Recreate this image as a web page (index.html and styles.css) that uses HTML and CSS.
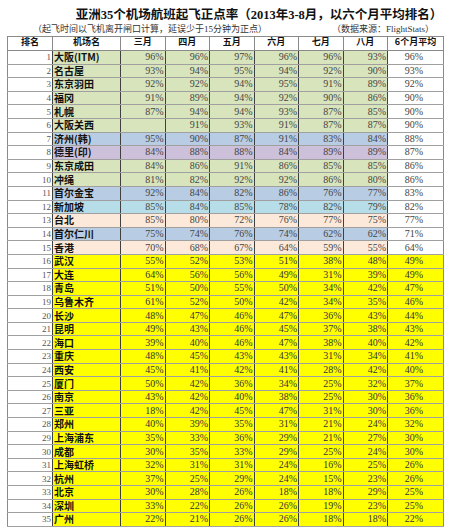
FILE: index.html
```html
<!DOCTYPE html>
<html lang="zh">
<head>
<meta charset="utf-8">
<link rel="stylesheet" href="styles.css">
</head>
<body>
<div class="page">
  <h1 class="title">亚洲35个机场航班起飞正点率（2013年3-8月，以六个月平均排名）</h1>
  <div class="sub">
    <span>（起飞时间以飞机离开闸口计算，延误少于15分钟为正点）</span>
    <span>（数据来源：FlightStats）</span>
  </div>
  <table class="tbl">
    <colgroup>
      <col class="c-rank"><col class="c-name"><col class="c-m"><col class="c-m"><col class="c-m"><col class="c-m"><col class="c-m"><col class="c-m"><col class="c-avg">
    </colgroup>
    <thead>
      <tr><th>排名</th><th>机场名</th><th>三月</th><th>四月</th><th>五月</th><th>六月</th><th>七月</th><th>八月</th><th>6个月平均</th></tr>
    </thead>
    <tbody>
      <tr class="g"><td class="r">1</td><td class="n">大阪(ITM)</td><td>96%</td><td>96%</td><td>97%</td><td>96%</td><td>96%</td><td>93%</td><td class="a">96%</td></tr>
      <tr class="g"><td class="r">2</td><td class="n">名古屋</td><td>93%</td><td>94%</td><td>95%</td><td>94%</td><td>92%</td><td>90%</td><td class="a">93%</td></tr>
      <tr class="g"><td class="r">3</td><td class="n">东京羽田</td><td>92%</td><td>92%</td><td>94%</td><td>95%</td><td>91%</td><td>89%</td><td class="a">92%</td></tr>
      <tr class="g"><td class="r">4</td><td class="n">福冈</td><td>91%</td><td>89%</td><td>94%</td><td>92%</td><td>90%</td><td>86%</td><td class="a">90%</td></tr>
      <tr class="g"><td class="r">5</td><td class="n">札幌</td><td>87%</td><td>94%</td><td>94%</td><td>93%</td><td>87%</td><td>85%</td><td class="a">90%</td></tr>
      <tr class="g"><td class="r">6</td><td class="n">大阪关西</td><td></td><td>91%</td><td>93%</td><td>91%</td><td>87%</td><td>87%</td><td class="a">90%</td></tr>
      <tr class="b"><td class="r">7</td><td class="n">济州(韩)</td><td>95%</td><td>90%</td><td>87%</td><td>91%</td><td>83%</td><td>84%</td><td class="a">88%</td></tr>
      <tr class="p"><td class="r">8</td><td class="n">德里(印)</td><td>84%</td><td>88%</td><td>88%</td><td>84%</td><td>89%</td><td>89%</td><td class="a">87%</td></tr>
      <tr class="g"><td class="r">9</td><td class="n">东京成田</td><td>84%</td><td>86%</td><td>91%</td><td>86%</td><td>85%</td><td>85%</td><td class="a">86%</td></tr>
      <tr class="g"><td class="r">10</td><td class="n">冲绳</td><td>81%</td><td>82%</td><td>92%</td><td>92%</td><td>86%</td><td>80%</td><td class="a">86%</td></tr>
      <tr class="b"><td class="r">11</td><td class="n">首尔金宝</td><td>92%</td><td>84%</td><td>82%</td><td>86%</td><td>76%</td><td>77%</td><td class="a">83%</td></tr>
      <tr class="c"><td class="r">12</td><td class="n">新加坡</td><td>85%</td><td>84%</td><td>85%</td><td>78%</td><td>82%</td><td>79%</td><td class="a">82%</td></tr>
      <tr class="o"><td class="r">13</td><td class="n">台北</td><td>85%</td><td>80%</td><td>72%</td><td>76%</td><td>77%</td><td>75%</td><td class="a">77%</td></tr>
      <tr class="b"><td class="r">14</td><td class="n">首尔仁川</td><td>75%</td><td>74%</td><td>76%</td><td>74%</td><td>62%</td><td>62%</td><td class="a">71%</td></tr>
      <tr class="o"><td class="r">15</td><td class="n">香港</td><td>70%</td><td>68%</td><td>67%</td><td>64%</td><td>59%</td><td>55%</td><td class="a">64%</td></tr>
      <tr class="y"><td class="r">16</td><td class="n">武汉</td><td>55%</td><td>52%</td><td>53%</td><td>51%</td><td>38%</td><td>48%</td><td class="a">49%</td></tr>
      <tr class="y"><td class="r">17</td><td class="n">大连</td><td>64%</td><td>56%</td><td>56%</td><td>49%</td><td>31%</td><td>39%</td><td class="a">49%</td></tr>
      <tr class="y"><td class="r">18</td><td class="n">青岛</td><td>51%</td><td>50%</td><td>55%</td><td>50%</td><td>34%</td><td>42%</td><td class="a">47%</td></tr>
      <tr class="y"><td class="r">19</td><td class="n">乌鲁木齐</td><td>61%</td><td>52%</td><td>50%</td><td>42%</td><td>34%</td><td>35%</td><td class="a">46%</td></tr>
      <tr class="y"><td class="r">20</td><td class="n">长沙</td><td>48%</td><td>47%</td><td>46%</td><td>47%</td><td>36%</td><td>43%</td><td class="a">44%</td></tr>
      <tr class="y"><td class="r">21</td><td class="n">昆明</td><td>49%</td><td>43%</td><td>46%</td><td>45%</td><td>37%</td><td>38%</td><td class="a">43%</td></tr>
      <tr class="y"><td class="r">22</td><td class="n">海口</td><td>39%</td><td>40%</td><td>46%</td><td>47%</td><td>38%</td><td>40%</td><td class="a">42%</td></tr>
      <tr class="y"><td class="r">23</td><td class="n">重庆</td><td>48%</td><td>45%</td><td>43%</td><td>43%</td><td>31%</td><td>34%</td><td class="a">41%</td></tr>
      <tr class="y"><td class="r">24</td><td class="n">西安</td><td>45%</td><td>41%</td><td>42%</td><td>41%</td><td>28%</td><td>42%</td><td class="a">40%</td></tr>
      <tr class="y"><td class="r">25</td><td class="n">厦门</td><td>50%</td><td>42%</td><td>36%</td><td>34%</td><td>25%</td><td>32%</td><td class="a">37%</td></tr>
      <tr class="y"><td class="r">26</td><td class="n">南京</td><td>43%</td><td>42%</td><td>40%</td><td>38%</td><td>25%</td><td>30%</td><td class="a">36%</td></tr>
      <tr class="y"><td class="r">27</td><td class="n">三亚</td><td>18%</td><td>42%</td><td>45%</td><td>47%</td><td>31%</td><td>30%</td><td class="a">36%</td></tr>
      <tr class="y"><td class="r">28</td><td class="n">郑州</td><td>40%</td><td>39%</td><td>35%</td><td>31%</td><td>21%</td><td>24%</td><td class="a">32%</td></tr>
      <tr class="y"><td class="r">29</td><td class="n">上海浦东</td><td>35%</td><td>33%</td><td>36%</td><td>29%</td><td>21%</td><td>27%</td><td class="a">30%</td></tr>
      <tr class="y"><td class="r">30</td><td class="n">成都</td><td>30%</td><td>35%</td><td>33%</td><td>29%</td><td>25%</td><td>24%</td><td class="a">30%</td></tr>
      <tr class="y"><td class="r">31</td><td class="n">上海虹桥</td><td>32%</td><td>31%</td><td>31%</td><td>24%</td><td>16%</td><td>25%</td><td class="a">26%</td></tr>
      <tr class="y"><td class="r">32</td><td class="n">杭州</td><td>37%</td><td>25%</td><td>29%</td><td>24%</td><td>15%</td><td>23%</td><td class="a">26%</td></tr>
      <tr class="y"><td class="r">33</td><td class="n">北京</td><td>30%</td><td>28%</td><td>26%</td><td>18%</td><td>18%</td><td>29%</td><td class="a">25%</td></tr>
      <tr class="y"><td class="r">34</td><td class="n">深圳</td><td>33%</td><td>22%</td><td>26%</td><td>26%</td><td>19%</td><td>23%</td><td class="a">25%</td></tr>
      <tr class="y"><td class="r">35</td><td class="n">广州</td><td>22%</td><td>21%</td><td>26%</td><td>26%</td><td>18%</td><td>18%</td><td class="a">22%</td></tr>
    </tbody>
  </table>
</div>
</body>
</html>
```
FILE: styles.css
```css
html, body {
  margin: 0;
  padding: 0;
  background: #ffffff;
}
.page {
  width: 450px;
  height: 532px;
  padding-top: 8px;
  box-sizing: border-box;
  font-family: "Liberation Serif", "Noto Sans CJK SC", serif;
  color: #222;
}
.title {
  margin: 0;
  font-family: "Liberation Serif", "Noto Sans CJK SC", serif;
  font-size: 12.5px;
  font-weight: bold;
  line-height: 15px;
  text-align: center;
  padding-left: 68px;
  color: #111;
}
.sub {
  display: flex;
  justify-content: space-between;
  padding: 0 16px 0 33px;
  font-size: 9px;
  line-height: 13px;
  color: #333;
}
.tbl {
  margin-left: 7px;
  margin-top: 0;
  width: 436px;
  table-layout: fixed;
  border-collapse: collapse;
  border: 1px solid #8a8a8a;
}
.c-rank { width: 45px; }
.c-name { width: 68px; }
.c-m { width: 44.5px; }
.c-avg { width: 56px; }
.tbl th {
  height: 12px;
  padding: 0 0 1px 0;
  font-family: "Noto Sans CJK SC", sans-serif;
  font-size: 9px;
  font-weight: bold;
  line-height: 10px;
  vertical-align: top;
  color: #111;
  border: 1px solid #8a8a8a;
  background: #fff;
  overflow: hidden;
  white-space: nowrap;
}
.tbl td {
  height: 12.6px;
  padding: 0 1px 0 0;
  font-size: 10px;
  line-height: 12px;
  text-align: right;
  color: #444;
  border-top: 1px solid #a0a0a0;
  border-bottom: 1px solid #a0a0a0;
  border-left: 1px solid #404040;
  border-right: 1px solid #404040;
  white-space: nowrap;
  overflow: hidden;
}
.tbl td.r {
  background: #fff;
  font-size: 9px;
  color: #555;
  border-left: 1px solid #8a8a8a;
  border-right: 1px solid #404040;
}
.tbl td.n {
  text-align: left;
  padding-left: 1px;
  font-family: "Noto Sans CJK SC", sans-serif;
  font-weight: bold;
  font-size: 10px;
  line-height: 12px;
  color: #111;
}
.tbl td.a {
  padding-right: 20px;
  border-right: 1px solid #8a8a8a;
}
.g td { background: #d8e4bc; }
.b td { background: #b8cce4; }
.p td { background: #ccc0da; }
.c td { background: #b7dde8; }
.o td { background: #fde9d9; }
.y td { background: #ffff00; color: #333; }
.g td.a, .b td.a, .p td.a, .c td.a, .o td.a { background: #fff; }
.y td.a { background: #ffff00; }
```
